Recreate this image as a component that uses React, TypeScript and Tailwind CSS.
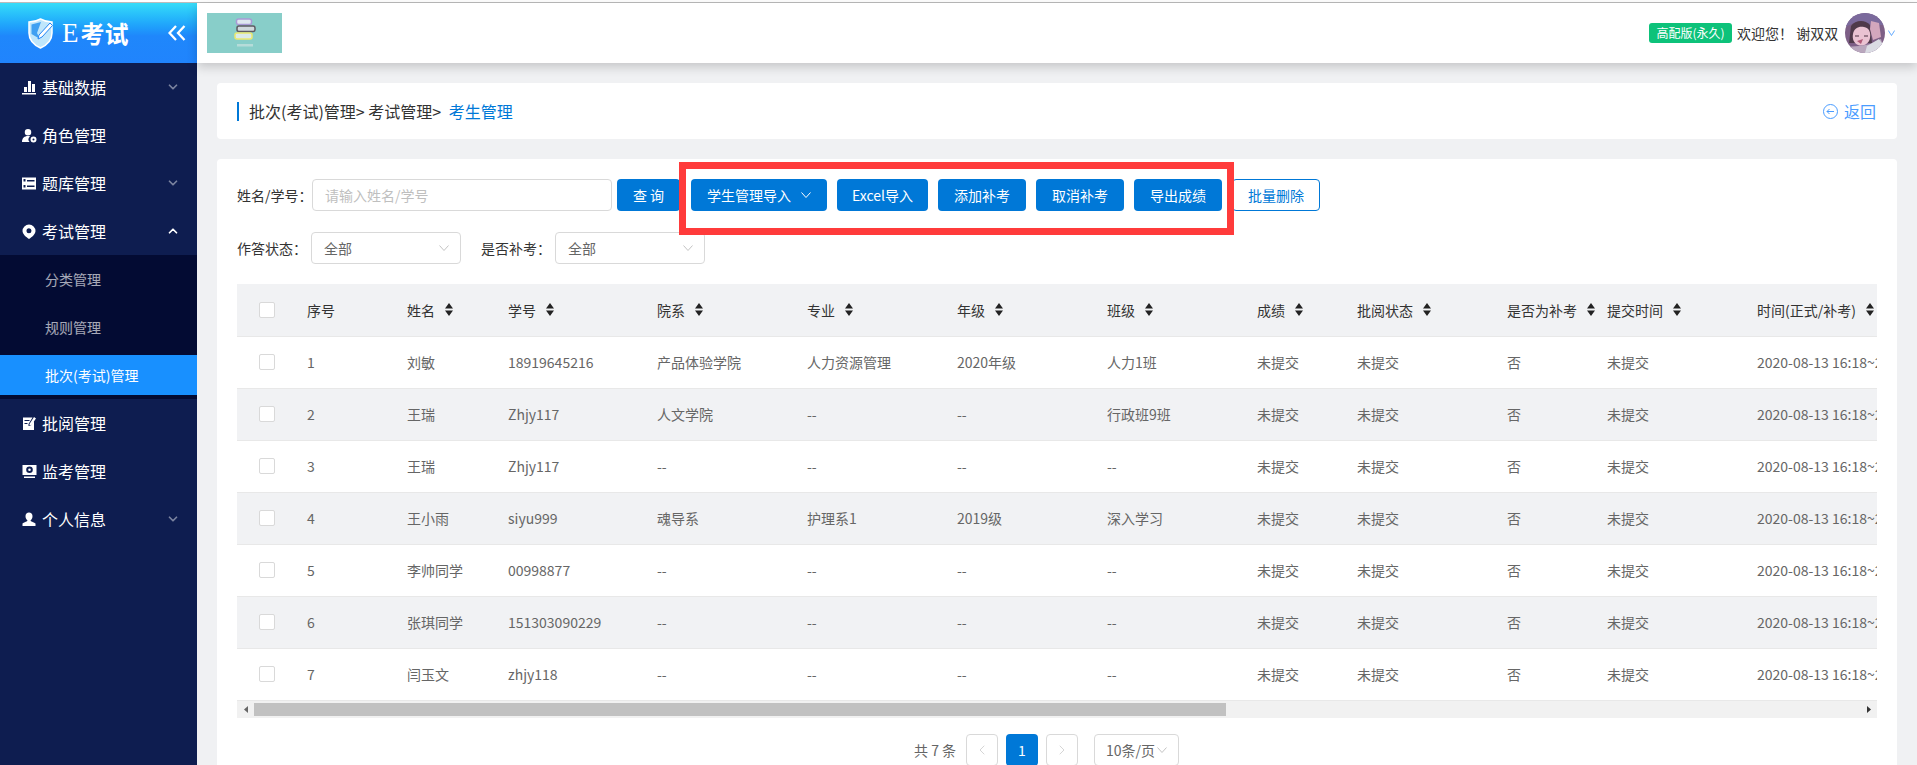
import { ChevronDown, ChevronUp, ChevronLeft, ChevronRight } from 'lucide-react';

const font = 'font-["Noto_Sans_CJK_SC","Noto_Sans",sans-serif]';

const rows = [
  ['1', '刘敏', '18919645216', '产品体验学院', '人力资源管理', '2020年级', '人力1班'],
  ['2', '王瑞', 'Zhjy117', '人文学院', '--', '--', '行政班9班'],
  ['3', '王瑞', 'Zhjy117', '--', '--', '--', '--'],
  ['4', '王小雨', 'siyu999', '魂导系', '护理系1', '2019级', '深入学习'],
  ['5', '李帅同学', '00998877', '--', '--', '--', '--'],
  ['6', '张琪同学', '151303090229', '--', '--', '--', '--'],
  ['7', '闫玉文', 'zhjy118', '--', '--', '--', '--'],
];

const headers = ['姓名', '学号', '院系', '专业', '年级', '班级', '成绩', '批阅状态', '是否为补考', '提交时间', '时间(正式/补考)'];
const colWidths = ['w-[70px]', 'w-[100px]', 'w-[101px]', 'w-[149px]', 'w-[150px]', 'w-[150px]', 'w-[150px]', 'w-[150px]', 'w-[100px]', 'w-[150px]', 'w-[100px]', 'w-[150px]', 'w-[250px]'];

function SortIcon() {
  return (
    <svg width="8" height="13" viewBox="0 0 8 13" className="ml-[10px] shrink-0">
      <path d="M4 0L8 5.5H0Z M4 13L0 7.5H8Z" fill="#222" />
    </svg>
  );
}

function Checkbox() {
  return <div className="w-4 h-4 rounded-[2px] border border-[#d9d9d9] bg-white" />;
}

function Arrow({ className = 'stroke-[#c4c4c4]', w = 10 }: { className?: string; w?: number }) {
  return (
    <svg width={w} height="6" viewBox="0 0 10 6" preserveAspectRatio="none" className={`${className} fill-none`}>
      <path d="M0.5 0.5L5 5.5L9.5 0.5" strokeWidth="1" />
    </svg>
  );
}

function MenuIcon({ d, evenodd }: { d: string; evenodd?: boolean }) {
  return (
    <svg width="15" height="15" viewBox="0 0 15 15" className="shrink-0">
      <path d={d} fill="#fff" fillRule={evenodd ? 'evenodd' : 'nonzero'} />
    </svg>
  );
}

const icons = {
  chart: 'M0 13h14v1.500H0z M2 7h3v5H2z M6 1h3v11H6z M10 4h3v8h-3z',
  role: 'M6 1a3 3 0 1 1 0 6.500a3 3 0 0 1 0-6.500z M0 14c0-4 2.500-6 6-6c1 0 1.500.2 2 .4A4 4 0 0 0 7.500 14z M11.500 8.500a3 3 0 1 1 0 6a3 3 0 0 1 0-6z M11.500 10.500a1 1 0 1 0 0 2a1 1 0 0 0 0-2z',
  bank: 'M0 1.500h14v12H0z M1.500 3v2.500h2V3z M1.500 9v2.500h2V9z M5 4v1.500h7.500V4z M5 9.500v1.500h7.500V9.500z',
  pin: 'M7 0.500a6.500 6.500 0 0 1 6.500 6.500c0 3-3.500 6-6.500 8c-3-2-6.500-5-6.500-8A6.500 6.500 0 0 1 7 0.500z M7 4.300a2.500 2.500 0 1 0 0 5a2.500 2.500 0 0 0 0-5z',
  mark: 'M1 1.500h9.500L6.500 8v2h2l3.500-4.500V14H1z M2.500 4v1h5V4z M2.500 7v1h3V7z M12 1l2 1.500L9 9.500H7.500V8z',
  monitor: 'M0.500 1h14v10h-14z M7.500 2.500a3.300 3.300 0 1 0 0 6.600a3.300 3.300 0 0 0 0-6.600z M7.500 4.500a1.300 1.300 0 1 1 0 2.600a1.300 1.300 0 0 1 0-2.600z M2 12.500h11V14H2z',
  user: 'M7 0.500a3.500 3.500 0 0 1 3.500 3.700c0 2-1 3.500-2 4.300c0 1 3 1.500 5 3V14H0.500v-2.500c2-1.500 5-2 5-3c-1-.8-2-2.300-2-4.300A3.500 3.500 0 0 1 7 0.500z',
};

function MenuItem({ icon, label, chevron }: { icon: string; label: string; chevron?: 'up' | 'down' }) {
  return (
    <div className="h-12 flex items-center pl-[22px] pr-[17px] text-white text-base">
      <MenuIcon d={icon} evenodd />
      <span className="ml-[5px] flex-1">{label}</span>
      {chevron === 'down' && <ChevronDown size={14} strokeWidth={3} className="text-white/45" />}
      {chevron === 'up' && <ChevronUp size={14} strokeWidth={3} className="text-white" />}
    </div>
  );
}

function SubItem({ label, active }: { label: string; active?: boolean }) {
  return (
    <div className="h-12 py-1">
      <div className={`h-10 pl-[45px] flex items-center text-sm ${active ? 'bg-[#1890ff] text-white' : 'text-white/65'}`}>{label}</div>
    </div>
  );
}

function Logo() {
  return (
    <div className="h-[60px] flex items-center bg-gradient-to-b from-[#37dcf8] via-[#1f87fb] via-55% to-[#2084fd] pl-[27px] pr-[11px]">
      <svg width="27" height="31" viewBox="0 0 27 31" className="shrink-0">
        <path d="M2 4C7 4 10 3 13.500 1C17 3 20 4 25 4V15C25 22 20 27 13.500 30C7 27 2 22 2 15Z" fill="#bfe6fb" stroke="#fff" strokeWidth="1.500" />
        <path d="M4.500 6.500L14 4L10 15L13 21L4.500 16Z" fill="#3fa0f2" />
        <path d="M12 17L23 5L25.500 7.500L15 19L11 21Z" fill="#fff" stroke="#2386f6" />
      </svg>
      <span className="ml-2 font-['Liberation_Serif',serif] text-[27px] leading-none text-white">E</span>
      <span className="ml-[2px] text-[24px] leading-none font-bold text-white font-['Noto_Sans_CJK_SC',sans-serif]">考试</span>
      <svg width="18" height="16" viewBox="0 0 18 16" className="ml-auto stroke-white fill-none">
        <path d="M8 1L1.500 8L8 15M16.500 1L10 8L16.500 15" strokeWidth="2.300" />
      </svg>
    </div>
  );
}

function Sidebar() {
  return (
    <aside className="w-[197px] shrink-0 h-full bg-[#0e1d50]">
      <Logo />
      <MenuItem icon={icons.chart} label="基础数据" chevron="down" />
      <MenuItem icon={icons.role} label="角色管理" />
      <MenuItem icon={icons.bank} label="题库管理" chevron="down" />
      <MenuItem icon={icons.pin} label="考试管理" chevron="up" />
      <div className="bg-[#030b33]">
        <SubItem label="分类管理" />
        <SubItem label="规则管理" />
        <SubItem label="批次(考试)管理" active />
      </div>
      <MenuItem icon={icons.mark} label="批阅管理" />
      <MenuItem icon={icons.monitor} label="监考管理" />
      <MenuItem icon={icons.user} label="个人信息" chevron="down" />
    </aside>
  );
}

function BookLogo() {
  return (
    <div className="w-[75px] h-10 bg-[#88cec9] flex items-center justify-center">
      <svg width="75" height="40" viewBox="0 0 75 40">
        <rect x="29.500" y="6" width="15" height="5.500" rx="2" fill="#dfe8ef" stroke="#a99ad6" strokeWidth="1.500" />
        <rect x="30" y="13" width="18" height="5.500" rx="2" fill="#cfd9dd" stroke="#5e5a62" strokeWidth="1.500" />
        <rect x="28" y="20" width="17" height="6" rx="2" fill="#dcebea" stroke="#ece96f" strokeWidth="1.500" />
        <rect x="30" y="31" width="16" height="2.500" fill="#b6dcd9" />
      </svg>
    </div>
  );
}

function Avatar() {
  return (
    <svg width="40" height="40" viewBox="0 0 40 40" className="rounded-full shrink-0">
      <rect width="40" height="40" fill="#7d5f86" />
      <path d="M0 0h40v12H26L14 8 0 14z" fill="#7b6a9c" />
      <path d="M6 13C10 7 20 6 25 12L27 30H4Z" fill="#4f3a4a" />
      <path d="M8 21C9 15 14 13 19 14C24 15 26 19 25 25C24 31 18 34 13 32C9 30 7 26 8 21Z" fill="#eac3d2" />
      <path d="M26 8L34 10L36 24L28 27L25 16Z" fill="#d3a7bd" />
      <path d="M12 28L18 26L16 31Z" fill="#b05a78" />
      <path d="M10 23h4M19 23h4" stroke="#4a3040" strokeWidth="1.200" />
      <path d="M0 34L14 33L26 31L36 26L40 40H0Z" fill="#b9a7bd" />
      <path d="M22 33L34 26L38 32L30 40H20Z" fill="#dadbe3" />
    </svg>
  );
}

function Topbar() {
  return (
    <header className="h-[60px] shrink-0 bg-white flex items-center pl-[10px] pr-[22px] shadow-[0_4px_10px_rgba(0,0,0,0.18)] relative">
      <BookLogo />
      <div className="ml-auto flex items-center">
        <span className="w-[83px] h-5 rounded-[3px] bg-[#0dc27a] text-white text-xs flex items-center justify-center">高配版(永久)</span>
        <span className="ml-[5px] w-[98px] text-sm text-[#333] whitespace-pre">欢迎您！ 谢双双</span>
        <div className="ml-[10px]"><Avatar /></div>
        <div className="ml-[3px]"><Arrow className="stroke-[#4a9cff]" w={7} /></div>
      </div>
    </header>
  );
}

function Breadcrumb() {
  return (
    <div className="h-14 shrink-0 bg-white rounded-[4px] flex items-center pl-5 pr-[21px] text-base text-[#333]">
      <div className="w-[2px] h-[19px] bg-[#0078d7]" />
      <span className="ml-[10px] whitespace-pre">批次(考试)管理&gt; 考试管理&gt; </span>
      <span className="ml-1 text-[#0078d7]">考生管理</span>
      <div className="ml-auto flex items-center text-[#4a9cff] text-base">
        <svg width="15" height="15" viewBox="0 0 15 15" className="fill-none stroke-[#4a9cff]">
          <circle cx="7.500" cy="7.500" r="7" />
          <path d="M11 7.500H4M6.500 5L4 7.500L6.500 10" />
        </svg>
        <span className="ml-[6px]">返回</span>
      </div>
    </div>
  );
}

function Select() {
  return (
    <div className="w-[150px] h-8 rounded-[4px] border border-[#d9d9d9] flex items-center justify-between pl-3 pr-[11px] text-sm text-[#666]">
      全部
      <Arrow />
    </div>
  );
}

function Btn({ w, label }: { w: string; label: string }) {
  return (
    <button className={`${w} h-8 rounded-[4px] bg-[#0078d7] text-white text-sm flex items-center justify-center whitespace-pre`}>{label}</button>
  );
}

function Filters() {
  return (
    <>
      <div className="flex items-center">
        <span className="w-[75px] text-sm text-[#333] whitespace-nowrap">姓名/学号：</span>
        <div className="w-[300px] h-8 rounded-[4px] border border-[#d9d9d9] pl-3 flex items-center text-sm text-[#bfbfbf]">请输入姓名/学号</div>
        <div className="ml-[5px]"><Btn w="w-[63px]" label="查 询" /></div>
        <button className="ml-[11px] w-[136px] h-8 rounded-[4px] bg-[#0078d7] text-white text-sm flex items-center justify-center gap-[10px]">
          学生管理导入
          <Arrow className="stroke-white" />
        </button>
        <div className="ml-[10px] flex gap-[10px]">
          <Btn w="w-[91px]" label="Excel导入" />
          <Btn w="w-[88px]" label="添加补考" />
          <Btn w="w-[88px]" label="取消补考" />
          <Btn w="w-[88px]" label="导出成绩" />
          <button className="w-[88px] h-8 rounded-[4px] border border-[#0078d7] bg-white text-[#0078d7] text-sm">批量删除</button>
        </div>
      </div>
      <div className="flex items-center mt-[21px]">
        <span className="w-[74px] text-sm text-[#333] whitespace-nowrap">作答状态：</span>
        <Select />
        <span className="ml-5 w-[74px] text-sm text-[#333] whitespace-nowrap">是否补考：</span>
        <Select />
      </div>
    </>
  );
}

function StudentTable() {
  return (
    <div className="mt-5 w-[1640px] overflow-hidden">
      <table className="table-fixed w-[1770px] border-collapse text-sm">
        <colgroup>
          {colWidths.map((w, i) => <col key={i} className={w} />)}
        </colgroup>
        <thead>
          <tr className="h-[52px] bg-[#f1f2f4] border-b border-[#e8e8e8] text-[#333]">
            <th className="pl-[22px] font-normal"><Checkbox /></th>
            <th className="text-left font-normal">序号</th>
            {headers.map((h) => (
              <th key={h} className="text-left font-normal">
                <div className="flex items-center whitespace-nowrap">{h}<SortIcon /></div>
              </th>
            ))}
          </tr>
        </thead>
        <tbody>
          {rows.map((r, i) => (
            <tr key={r[0]} className={`h-[52px] border-b border-[#e8e8e8] text-[#666] ${i % 2 === 1 ? 'bg-[#f1f2f4]' : 'bg-white'}`}>
              <td className="pl-[22px]"><Checkbox /></td>
              {r.map((c, j) => <td key={j}>{c}</td>)}
              <td>未提交</td>
              <td>未提交</td>
              <td>否</td>
              <td>未提交</td>
              <td className="whitespace-nowrap">2020-08-13 16:18~2020-08-13 18:18</td>
            </tr>
          ))}
        </tbody>
      </table>
      <div className="h-[17px] bg-[#f1f1f1] flex items-center">
        <div className="w-[17px] flex justify-center">
          <svg width="4" height="7" viewBox="0 0 4 7"><path d="M4 0V7L0 3.500Z" fill="#666" /></svg>
        </div>
        <div className="w-[972px] h-[13px] bg-[#c1c1c1]" />
        <div className="w-[17px] ml-auto flex justify-center">
          <svg width="4" height="7" viewBox="0 0 4 7"><path d="M0 0V7L4 3.500Z" fill="#333" /></svg>
        </div>
      </div>
    </div>
  );
}

function PageBox({ children, active }: { children: React.ReactNode; active?: boolean }) {
  return (
    <div className={`w-8 h-8 rounded-[4px] flex items-center justify-center text-sm ${active ? 'bg-[#0078d7] text-white' : 'border border-[#d9d9d9] text-[#bfbfbf]'}`}>{children}</div>
  );
}

function Pagination() {
  return (
    <div className="mt-4 pl-[677px] flex items-center text-sm text-[#666]">
      <span className="w-[44px] whitespace-nowrap">共 7 条</span>
      <div className="ml-2 flex gap-2">
        <PageBox><ChevronLeft size={16} strokeWidth={1} /></PageBox>
        <PageBox active>1</PageBox>
        <PageBox><ChevronRight size={16} strokeWidth={1} /></PageBox>
      </div>
      <div className="ml-4 w-[85px] h-8 rounded-[4px] border border-[#d9d9d9] flex items-center justify-center gap-[2px] whitespace-nowrap">
        10条/页
        <Arrow />
      </div>
    </div>
  );
}

export default function App() {
  return (
    <div className={`w-[1917px] h-[765px] overflow-hidden flex flex-col bg-white ${font}`}>
      <div className="h-[3px] shrink-0 bg-white border-b border-[#bbb]" />
      <div className="flex flex-1 min-h-0">
        <Sidebar />
        <main className="flex-1 flex flex-col min-w-0 bg-[#f0f1f3]">
          <Topbar />
          <div className="flex-1 min-h-0 flex flex-col px-5 pt-5 gap-5 overflow-hidden">
            <Breadcrumb />
            <section className="relative flex-1 bg-white rounded-t-[4px] px-5 pt-5">
              <Filters />
              <StudentTable />
              <Pagination />
              <div className="absolute left-[462px] top-[3px] w-[555px] h-[73px] border-[7px] border-[#ff3b3b]" />
            </section>
          </div>
        </main>
      </div>
    </div>
  );
}
